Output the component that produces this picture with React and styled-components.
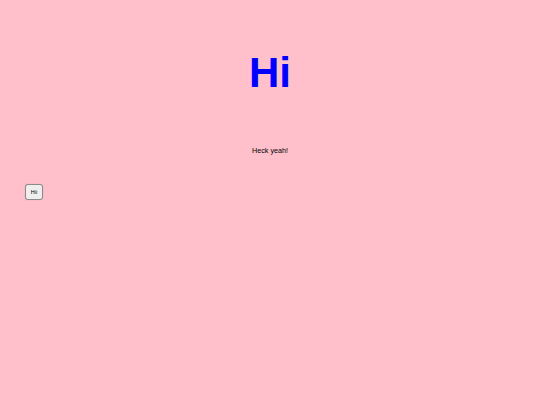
import React from "react";
import {createGlobalStyle, styled} from "styled-components";

const GlobalStyle = createGlobalStyle`
  html, body {
    margin: 0;
    padding: 0;
    background: pink;
    font-family: "Liberation Sans", Arial, sans-serif;
  }
`

const App = () => {
  return (
    <Page>
      <GlobalStyle/>
      <Title>Hi</Title>
      <Message>Heck yeah!</Message>
      <Actions>
        <Button>Hii</Button>
      </Actions>
    </Page>
  );
};

export default App;

const Page = styled.div`
  width: 540px;
  height: 405px;
  background: pink;
  padding-top: 49px;
  box-sizing: border-box;
`

const Title = styled.h1`
  margin: 0;
  text-align: center;
  color: blue;
  font-size: 42px;
  font-weight: bold;
  line-height: 48px;
`

const Message = styled.p`
  margin: 49px 0 0;
  text-align: center;
  font-size: 7.2px;
  line-height: 10px;
  color: #000;
`

const Actions = styled.div`
  padding: 24px 0 0 25px;
`

const Button = styled.button`
  width: 18px;
  height: 16px;
  padding: 0;
  border: 1px solid #8a8a8a;
  border-radius: 3px;
  background: #efefef;
  box-shadow: 0 0 1px rgba(0, 0, 0, 0.25);
  font-family: "Liberation Sans", Arial, sans-serif;
  font-size: 5.5px;
  color: #000;
`
